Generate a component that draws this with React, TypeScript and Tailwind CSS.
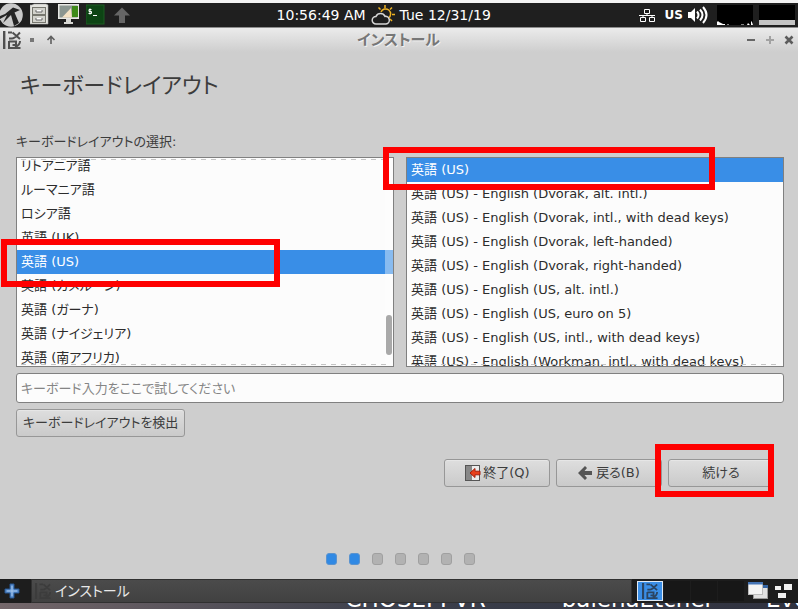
import React from "react";

const LANGUAGES = [
  "リトアニア語",
  "ルーマニア語",
  "ロシア語",
  "英語 (UK)",
  "英語 (US)",
  "英語 (カメルーン)",
  "英語 (ガーナ)",
  "英語 (ナイジェリア)",
  "英語 (南アフリカ)",
];

const VARIANTS = [
  "英語 (US)",
  "英語 (US) - English (Dvorak, alt. intl.)",
  "英語 (US) - English (Dvorak, intl., with dead keys)",
  "英語 (US) - English (Dvorak, left-handed)",
  "英語 (US) - English (Dvorak, right-handed)",
  "英語 (US) - English (US, alt. intl.)",
  "英語 (US) - English (US, euro on 5)",
  "英語 (US) - English (US, intl., with dead keys)",
  "英語 (US) - English (Workman, intl., with dead keys)",
];

const BUTTON =
  "flex h-7 items-center justify-center rounded-[3px] border border-[#979797] bg-gradient-to-b from-[#dedede] to-[#cacaca] text-[13px] text-[#3c3c3c] shadow-[inset_0_1px_0_#e6e6e6]";

function InstallerLogo({ className }: { className: string }) {
  return (
    <svg viewBox="0 0 18 18" className={className} fill="none" stroke="currentColor" strokeWidth="2" aria-hidden="true">
      <path d="M1.200 0v18" strokeWidth="2.400" />
      <path d="M5 1.500h4M6 7.500h3c3 0 5-3 8-6M9.500 1.500l7.500 6.500M6 10v7h11.500M6 10.500h7v3.500h-3.500M17 10c0 3-2 5-5 6" />
    </svg>
  );
}

function TopPanel() {
  return (
    <header className="flex h-7 shrink-0 items-center justify-between border-b border-t-[3px] border-b-[#8d8d8d] border-t-[#f3f3f3] bg-[#1f1f1f] text-[14px] text-white">
      <nav className="flex flex-[10] items-center" aria-label="ランチャー">
        <button aria-label="メニュー" className="w-[30px]">
          <svg viewBox="0 0 30 24" className="h-6 w-[30px]">
            <circle cx="11" cy="12" r="11.800" fill="#c9c9c9" />
            <path d="M0 13L5 11L13 4.500L20 7L14.500 9.500L19 20L14 23L11 12L3 20L7 12L0 16Z" fill="#242424" />
          </svg>
        </button>
        <button aria-label="ファイル" className="w-7">
          <svg viewBox="0 0 28 24" className="h-6 w-7">
            <path d="M2 2l2-1h12l2 1v19H0V2z" fill="#e4e4df" stroke="#aaa" strokeWidth=".6" />
            <rect x="2.500" y="4.500" width="13" height="7" fill="#d2d2cc" stroke="#77776f" />
            <rect x="2.500" y="12.500" width="13" height="7" fill="#d2d2cc" stroke="#77776f" />
            <path d="M6 7v2h6V7M6 15v2h6v-2" fill="#fff" stroke="#666" />
          </svg>
        </button>
        <button aria-label="ディスプレイ" className="w-7">
          <svg viewBox="0 0 28 24" className="h-6 w-7">
            <rect x="0" y="1" width="21" height="15" fill="#e8e8e4" />
            <rect x="1.500" y="2.500" width="18" height="12" fill="#8b9690" />
            <path d="M4 14.500L13 5l1 9.500z" fill="#f4e2c4" />
            <rect x="14" y="3" width="6" height="11" fill="#3f8a19" />
            <path d="M8 16h5v3h2v2H6v-2h2z" fill="#d8d8d4" />
          </svg>
        </button>
        <button aria-label="ターミナル" className="w-7">
          <svg viewBox="0 0 28 24" className="h-6 w-7">
            <rect x="0" y="2" width="18" height="19" fill="#0d4414" stroke="#1c5c22" />
            <path d="M5.500 6.500H3v2h2.500v2H2.500M4 5.500v6M7 12.500h4" fill="none" stroke="#fff" strokeWidth="1" />
          </svg>
        </button>
        <button aria-label="上へ" className="w-7">
          <svg viewBox="0 0 28 24" className="h-6 w-7">
            <path d="M8 4.500l8 8h-5V20H5v-7.500H0z" fill="#666" />
          </svg>
        </button>
      </nav>
      <div className="flex items-center gap-1">
        <time>10:56:49 AM</time>
        <svg viewBox="0 0 26 24" className="h-6 w-[26px]" fill="none" strokeWidth="1.500" aria-hidden="true">
          <path d="M15 2v3M8.500 4.500l2 2M22 4.500l-2 2M22 11.500h3M20 16l2 2M11 9a5 5 0 1 1 7.500 6" stroke="#eeb223" />
          <path d="M6 21a3.800 3.800 0 0 1 0-7.600a5 5 0 0 1 9 0a3.800 3.800 0 0 1 1 7.600z" stroke="#d7d7d7" />
        </svg>
        <span>Tue 12/31/19</span>
      </div>
      <div className="flex flex-[11] items-center justify-end gap-1 pr-[3px]">
        <svg viewBox="0 0 16 16" className="mr-[6px] h-4 w-4" fill="none" stroke="#fff" aria-label="ネットワーク">
          <path d="M5.500 2.500h5v4h-5zM1.500 10.500h5v4h-5zM10.500 10.500h5v4h-5zM8 6.500v2M0 8.500h16M4 8.500v2M13 8.500v2" />
        </svg>
        <span className="text-[12px] font-bold">US</span>
        <svg viewBox="0 0 22 20" className="mr-1 h-5 w-[22px]" fill="none" stroke="#fff" strokeWidth="2" aria-label="音量">
          <path d="M1 7h3l4-4v14l-4-4H1z" fill="#fff" stroke="none" />
          <path d="M10 6.500q3 3.500 0 7M13 4.500q5 5.500 0 11M16 2q7 8 0 16" />
        </svg>
        <svg viewBox="0 0 36 20" className="h-5 w-9" aria-label="CPU 使用率">
          <path d="M0 0h36v20H0z" fill="#000" />
          <path d="M0 20v-3l1-1 1 1 2 1 2 1h2v1zM34 20v-4l1 1 1 3zM10 19.500h2v.5h-2zM24 19.500h3v.5h-3zM30 20l1-2 1 1 1 1z" fill="#fff" />
        </svg>
        <svg viewBox="0 0 36 20" className="ml-[2px] h-5 w-9" aria-label="メモリ使用率">
          <path d="M0 0h36v15H0z" fill="#000" />
          <path d="M0 15h36v5H0z" fill="#c4c4c4" />
        </svg>
      </div>
    </header>
  );
}

function TitleBar() {
  return (
    <div className="flex h-6 shrink-0 items-center bg-gradient-to-b from-[#ebebeb] to-[#cecece] text-[#5f5f5f]">
      <div className="flex flex-1 items-center pl-[3px]">
        <InstallerLogo className="h-[18px] w-[18px] text-[#505050]" />
        <span className="ml-[9px] h-1 w-1 bg-[#777]" />
        <svg viewBox="0 0 10 10" className="ml-3 h-[10px] w-[10px]" fill="none" stroke="currentColor" strokeWidth="1.600" aria-hidden="true">
          <path d="M5 9V2M1.500 5L5 1.500L8.500 5" />
        </svg>
      </div>
      <h1 className="text-[15px] font-bold text-[#777] [text-shadow:1px_1px_0_#f2f2f2]">インストール</h1>
      <div className="flex flex-1 justify-end gap-[9px] pr-1">
        <button aria-label="最小化">
          <svg viewBox="0 0 10 10" className="h-[10px] w-[10px]" stroke="#666" strokeWidth="2">
            <path d="M1 5h8" />
          </svg>
        </button>
        <button aria-label="最大化">
          <svg viewBox="0 0 10 10" className="h-[10px] w-[10px]" stroke="#a2a2a2" strokeWidth="2">
            <path d="M1 5h8M5 1v8" />
          </svg>
        </button>
        <button aria-label="閉じる">
          <svg viewBox="0 0 10 10" className="h-[10px] w-[10px]" stroke="#5c5c5c" strokeWidth="2.600">
            <path d="M1.500 1.500l7 7M8.500 1.500l-7 7" />
          </svg>
        </button>
      </div>
    </div>
  );
}

function OptionList({ items, selected, label, scrolled }: { items: string[]; selected: number; label: string; scrolled?: boolean }) {
  return (
    <div className="relative border border-[#808080] bg-[#fcfcfc]">
      <ul
        role="listbox"
        aria-label={label}
        className={`flex h-52 flex-col overflow-hidden text-[13px] text-[#2c2c2c] ${scrolled ? "justify-center" : "justify-start"}`}
      >
        {items.map((item, i) => (
          <li
            key={item}
            role="option"
            aria-selected={i === selected}
            className={`h-6 shrink-0 whitespace-nowrap pl-1 leading-6 ${i === selected ? "bg-[#398ee7] text-white" : ""}`}
          >
            {item}
          </li>
        ))}
      </ul>
      {scrolled && (
        <>
          <span className="absolute inset-x-1 top-px h-px bg-[repeating-linear-gradient(90deg,#c4c4c4_0_5px,transparent_5px_10px)]" />
          <span className="absolute inset-y-0 right-0 w-2 bg-white/40" />
          <span className="absolute bottom-[11px] right-px h-10 w-[6px] rounded-full bg-[#a9a9a9]" />
        </>
      )}
      <span className="absolute inset-x-1 bottom-px h-px bg-[repeating-linear-gradient(90deg,#c4c4c4_0_5px,transparent_5px_10px)]" />
    </div>
  );
}

function Taskbar() {
  return (
    <footer className="flex h-6 shrink-0 items-center bg-[#1d1d1d]">
      <button aria-label="デスクトップを表示" className="flex w-[31px] items-center pl-1">
        <svg viewBox="0 0 16 16" className="h-4 w-4">
          <path d="M6 1h4v5h5v4h-5v5H6v-5H1V6h5z" fill="#5f93d3" stroke="#27558f" />
          <path d="M8 3v10M3 8h10" stroke="#a9c8ec" />
        </svg>
      </button>
      <button className="flex h-6 flex-1 items-center border border-[#303030] bg-gradient-to-b from-[#4b4b4b] to-[#414141] pl-[3px] text-[14px] text-[#e8e8e8]">
        <InstallerLogo className="mr-1 h-4 w-4 text-[#3c3c3c]" />
        インストール
      </button>
      <div className="ml-[5px] flex items-center gap-px" aria-label="ワークスペース">
        <div className="flex h-5 w-[26px] items-center justify-center border border-[#dfe9f4] bg-[#3a8ee6]">
          <InstallerLogo className="h-4 w-4 text-[#2b4562]" />
        </div>
        <div className="h-5 w-[26px] bg-[#171717]" />
        <div className="h-5 w-[26px] bg-[#171717]" />
        <div className="h-5 w-[26px] bg-[#171717]" />
      </div>
      <button aria-label="ウィンドウ" className="ml-1">
        <svg viewBox="0 0 20 20" className="h-5 w-5">
          <rect x="5.500" y="5.500" width="14" height="12" fill="#e0e0e0" stroke="#999" />
          <rect x="5" y="4" width="15" height="3" fill="#3465a4" />
          <rect x=".5" y="2.500" width="14" height="11" fill="#f4f4f4" stroke="#bbb" />
          <rect x="0" y="1" width="15" height="2.500" fill="#4474b5" />
        </svg>
      </button>
      <button aria-label="配置" className="ml-[6px] mr-1">
        <svg viewBox="0 0 20 20" className="h-5 w-5" fill="#f1f1f1">
          <rect x="1" y="5" width="6" height="4" />
          <rect x="10" y="3" width="8" height="6" />
          <rect x="4" y="12" width="8" height="5" />
        </svg>
      </button>
    </footer>
  );
}

export default function App() {
  return (
    <div className="flex min-h-screen flex-col bg-[#cecece] font-['DejaVu_Sans','Noto_Sans_CJK_JP',sans-serif] [font-feature-settings:'palt']">
      <TopPanel />
      <TitleBar />
      <main className="flex flex-1 flex-col pb-[14px] pl-4 pr-[14px]">
        <h2 className="mt-[18px] pl-1 text-[22px] leading-8 text-[#3c3c3c]">キーボードレイアウト</h2>
        <p className="mb-[5px] mt-[30px] text-[13px] leading-5 text-[#3c3c3c]">キーボードレイアウトの選択:</p>
        <div className="grid grid-cols-2 gap-3">
          <div className="relative">
            <OptionList items={LANGUAGES} selected={4} label="言語" scrolled />
            <span className="pointer-events-none absolute -left-[15px] top-[82px] z-10 h-12 w-[279px] border-[6px] border-[#fe0000]" />
          </div>
          <div className="relative">
            <OptionList items={VARIANTS} selected={0} label="バリアント" />
            <span className="pointer-events-none absolute -left-[23px] -top-[10px] z-10 h-[43px] w-[332px] border-[6px] border-[#fe0000]" />
          </div>
        </div>
        <input
          aria-label="キーボード入力テスト"
          placeholder="キーボード入力をここで試してください"
          className="mt-[6px] h-[30px] rounded-[3px] border border-[#808080] bg-[#fcfcfc] px-1 text-[13px] text-[#2c2c2c] placeholder:text-[#858585]"
        />
        <button className={`${BUTTON} mt-[6px] self-start px-[6px]`}>キーボードレイアウトを検出</button>
        <div className="mt-[22px] flex justify-end gap-[6px] pr-[10px]">
          <button className={`${BUTTON} w-[106px] gap-px`}>
            <svg viewBox="0 0 18 18" className="h-[18px] w-[18px]" aria-hidden="true">
              <rect x="1.500" y="1.500" width="14" height="15" fill="#ececec" stroke="#555" />
              <path d="M2 2h6v14H2z" fill="#888" />
              <path d="M6 9l5-4.500v2.700h5v3.600h-5v2.700z" fill="#e8401c" stroke="#a51c08" />
            </svg>
            終了(Q)
          </button>
          <button className={`${BUTTON} w-[106px] gap-1`}>
            <svg viewBox="0 0 14 14" className="h-[14px] w-[14px]" fill="#555" aria-hidden="true">
              <path d="M0 7L7 0l2 2-2.500 3H14v4H6.500L9 12l-2 2z" />
            </svg>
            戻る(B)
          </button>
          <div className="relative">
            <button className={`${BUTTON} w-[106px]`}>続ける</button>
            <span className="pointer-events-none absolute -left-[13px] -top-[15px] z-10 h-[53px] w-[119px] border-[6px] border-[#fe0000]" />
          </div>
        </div>
        <div className="mt-auto flex justify-center gap-3" aria-label="ステップ 2 / 7">
          {[0, 1, 2, 3, 4, 5, 6].map((step) => (
            <span
              key={step}
              className={`h-3 w-[11px] rounded-[3px] border ${step < 2 ? "border-[#5a93cf] bg-[#3089e4]" : "border-[#a0a0a0] bg-[#b2b2b2]"}`}
            />
          ))}
        </div>
      </main>
      <Taskbar />
      <div className="flex h-[6px] shrink-0 items-end justify-end overflow-hidden whitespace-nowrap bg-gradient-to-r from-[#74676a] via-[#3b3f4b] to-[#30323f] text-[23px] leading-5 text-white">
        <span className="mr-[76px]">CHOSEPI VR</span>
        <span className="mr-[52px]">balenaEtcher</span>
        <span className="w-8">Eve</span>
      </div>
    </div>
  );
}
